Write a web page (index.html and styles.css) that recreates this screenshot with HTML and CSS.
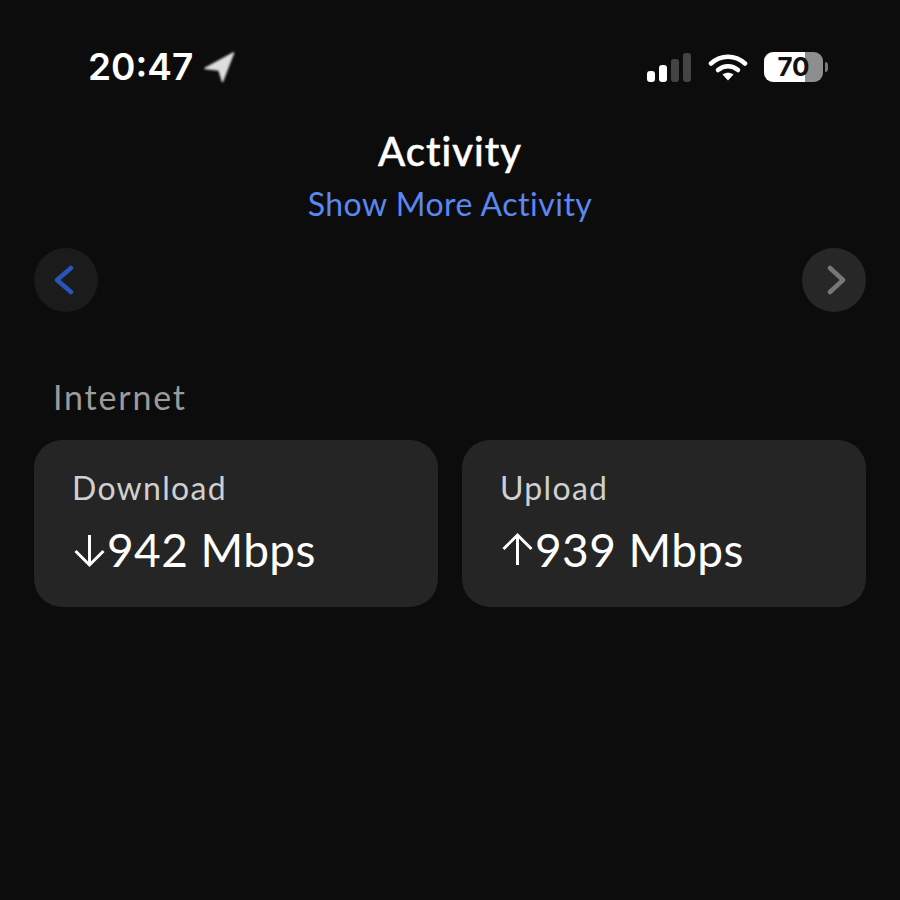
FILE: index.html
```html
<!DOCTYPE html>
<html lang="en">
<head>
    <meta charset="UTF-8">
    <title>Activity</title>
    <link rel="stylesheet" href="styles.css">
</head>
<body>
    <div class="status-bar">
        <div class="status-left">
            <span class="time">20:47</span>
            <svg class="location" width="32" height="32" viewBox="0 0 32 32"><path d="M30.500 2 2 17.500l14 1.500 3.500 11.500z" fill="#dedede" stroke="#dedede" stroke-width="1.500" stroke-linejoin="round"/></svg>
        </div>
        <div class="status-right">
            <div class="signal">
                <span class="bar bar-1"></span>
                <span class="bar bar-2"></span>
                <span class="bar bar-3"></span>
                <span class="bar bar-4"></span>
            </div>
            <svg class="wifi" width="40" height="28" viewBox="0 0 40 28">
                <path d="M3 10.500C13 1.500 27 1.500 37 10.500" fill="none" stroke="#fff" stroke-width="4.500" stroke-linecap="round"/>
                <path d="M10 17c6-5 14-5 20 0" fill="none" stroke="#fff" stroke-width="4.500" stroke-linecap="round"/>
                <path d="M14.500 21.500c3.500-2.500 7.500-2.500 11 0L20 27.500z" fill="#fff"/>
            </svg>
            <div class="battery">
                <div class="battery-body"><span class="battery-level">70</span></div>
                <span class="battery-tip"></span>
            </div>
        </div>
    </div>

    <div class="header">
        <h1>Activity</h1>
        <a class="more-link">Show More Activity</a>
    </div>

    <div class="nav-row">
        <div class="nav-btn">
            <svg width="24" height="32" viewBox="0 0 24 32"><path d="M17 4 3 16l14 12" fill="none" stroke="#2a55b8" stroke-width="4.500" stroke-linecap="round" stroke-linejoin="round"/></svg>
        </div>
        <div class="nav-btn nav-btn-next">
            <svg width="24" height="32" viewBox="0 0 24 32"><path d="M8 4l13 12L8 28" fill="none" stroke="#777" stroke-width="4.500" stroke-linecap="round" stroke-linejoin="round"/></svg>
        </div>
    </div>

    <div class="section">
        <div class="section-title">Internet</div>
        <div class="cards">
            <div class="card">
                <div class="card-label">Download</div>
                <div class="card-value">
                    <svg class="arrow" width="35" height="36" viewBox="0 0 34 36"><path d="M17 3v30M3 19l14 14 14-14" fill="none" stroke="#fff" stroke-width="3"/></svg>
                    <span>942 Mbps</span>
                </div>
            </div>
            <div class="card">
                <div class="card-label">Upload</div>
                <div class="card-value">
                    <svg class="arrow" width="35" height="36" viewBox="0 0 34 36"><path d="M17 33V3M3 17 17 3l14 14" fill="none" stroke="#fff" stroke-width="3"/></svg>
                    <span>939 Mbps</span>
                </div>
            </div>
        </div>
    </div>
</body>
</html>
```

FILE: styles.css
```css
body {
    margin: 0;
    background-color: #0c0c0c;
    color: #fff;
    font-family: "Lato", "Open Sans", sans-serif;
}
.status-bar {
    display: flex;
    justify-content: space-between;
    align-items: center;
    height: 44px;
    padding: 45px 72px 0 88px;
}
.status-left {
    display: flex;
    align-items: center;
    gap: 10px;
}
.time {
    font-family: "Inter", sans-serif;
    font-size: 37px;
    font-weight: 600;
    line-height: 44px;
}
.location {
    filter: blur(1px);
}
.status-right {
    display: flex;
    align-items: center;
    gap: 16px;
}
.signal {
    display: flex;
    align-items: flex-end;
    gap: 4px;
    height: 29px;
    margin-right: 1px;
}
.bar {
    width: 8px;
    border-radius: 3px;
    background-color: #fff;
}
.bar-1 { height: 11px; }
.bar-2 { height: 17px; }
.bar-3 { height: 23px; background-color: #444; }
.bar-4 { height: 29px; background-color: #444; }
.battery {
    display: flex;
    align-items: center;
    gap: 2px;
}
.battery-body {
    width: 59px;
    height: 30px;
    border-radius: 9px;
    background: linear-gradient(to right, #fff 70%, #8e8e8e 70%);
    text-align: center;
}
.battery-level {
    font-family: "Inter", sans-serif;
    font-size: 26px;
    font-weight: 700;
    line-height: 30px;
    color: #111;
}
.battery-tip {
    width: 3px;
    height: 10px;
    border-radius: 0 3px 3px 0;
    background-color: #777;
}
.header {
    margin-top: 38px;
    text-align: center;
}
h1 {
    margin: 0;
    font-size: 40px;
    font-weight: 500;
    line-height: 48px;
    letter-spacing: 1px;
    -webkit-text-stroke: 0.5px #fff;
}
.more-link {
    display: block;
    margin-top: 9px;
    font-size: 32px;
    line-height: 40px;
    letter-spacing: 0.5px;
    color: #5b87f2;
}
.nav-row {
    display: flex;
    justify-content: space-between;
    margin-top: 24px;
    padding: 0 34px;
}
.nav-btn {
    display: flex;
    align-items: center;
    justify-content: center;
    width: 64px;
    height: 64px;
    border-radius: 50%;
    background-color: #1b1b1b;
}
.nav-btn-next {
    background-color: #272727;
}
.section {
    margin-top: 64px;
    padding: 0 34px;
}
.section-title {
    margin-left: 19px;
    font-size: 34px;
    line-height: 42px;
    letter-spacing: 1.8px;
    color: #9b9b9b;
}
.cards {
    display: grid;
    grid-template-columns: 1fr 1fr;
    gap: 24px;
    margin-top: 22px;
}
.card {
    height: 167px;
    box-sizing: border-box;
    padding: 28px 38px 0;
    border-radius: 28px;
    background-color: #252525;
}
.card-label {
    font-size: 32px;
    line-height: 40px;
    letter-spacing: 1.3px;
    color: #d0d0d0;
}
.card-value {
    display: flex;
    align-items: center;
    margin-top: 15px;
    font-size: 46px;
    line-height: 54px;
    letter-spacing: 0.4px;
}
.arrow {
    flex-shrink: 0;
}
```
